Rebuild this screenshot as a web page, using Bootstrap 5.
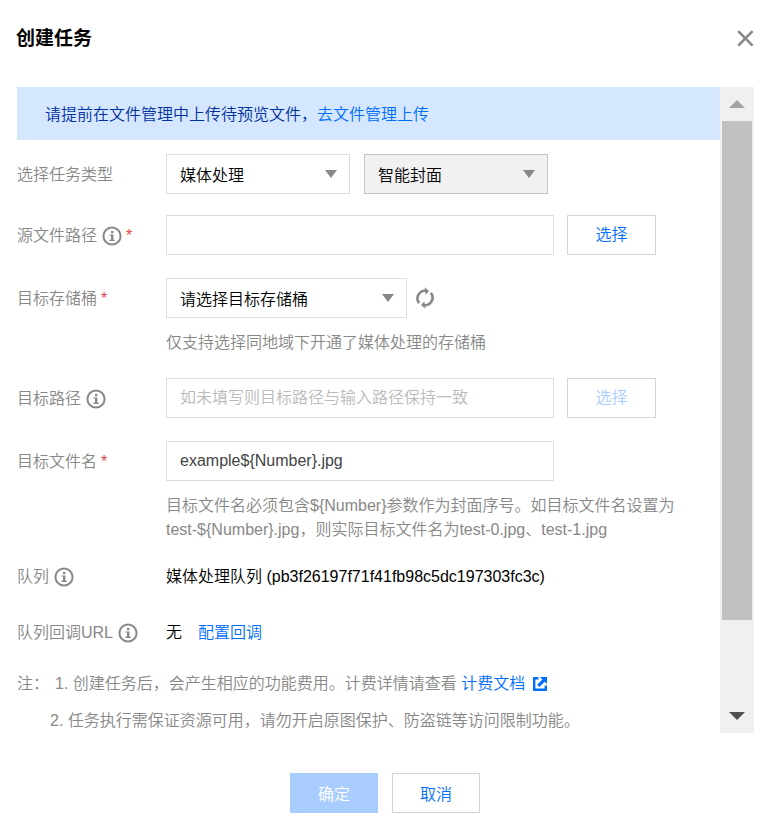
<!DOCTYPE html>
<html lang="zh-CN">
<head>
<meta charset="utf-8">
<meta name="viewport" content="width=device-width, initial-scale=1">
<title>创建任务</title>
<link rel="stylesheet" href="https://cdn.jsdelivr.net/npm/bootstrap@5.3.0/dist/css/bootstrap.min.css">
<style>
  body { font-family: "Liberation Sans", "Noto Sans CJK SC", sans-serif; font-size: 16px; font-weight: 350; line-height: 24px; color: #000; }
  a { color: #006eff; text-decoration: none; }
  .dialog-head { padding: 26px 12px 36px 16px; }
  .dialog-title { font-size: 19px; line-height: 24px; padding-top: 1px; }
  .close-btn { width: 17px; height: 17px; color: #888; }
  .dialog-body { margin: 0 12px 0 17px; }
  .notice { background: #d5e7ff; color: #0031a0; padding: 16px 28px 13px; margin-bottom: 14px; }
  .form-line { margin-bottom: 23px; }
  .form-line-first { margin-bottom: 21px; }
  .form-line-last { margin-top: 32px; margin-bottom: 27px; }
  .line-label { flex: 0 0 149px; color: #888; }
  .tall { min-height: 40px; padding-top: 2px; }
  .req { color: #e54545; margin-left: 4px; }
  .info-icon { width: 20px; height: 20px; margin-left: 5px; }
  .box, .box:disabled { height: 40px; border: 1px solid #ddd; border-radius: 0; padding: 0 13px; font-size: 16px; font-weight: 350; line-height: 24px; color: #000; }
  .box::placeholder { color: #bbb; }
  input.box { color: #444; max-width: 388px; }
  select.box { background-image: url("data:image/svg+xml,%3Csvg xmlns='http://www.w3.org/2000/svg' viewBox='0 0 12 8'%3E%3Cpath d='M0 0h12L6 8z' fill='%23888'/%3E%3C/svg%3E"); background-size: 12px 8px; background-position: right 12px center; padding-top: 3px; }
  select.box.picked { background-color: #f1f1f1; border-color: #c4c4c4; }
  .w-type { max-width: 184px; }
  .w-bucket { max-width: 241px; }
  .gap-type { gap: 14px; }
  .gap-path { gap: 13px; }
  .btn-act { height: 40px; min-width: 88px; border: 1px solid #cfd5de; border-radius: 0; padding: 0 12px; font-size: 16px; font-weight: 350; line-height: 24px; color: #006eff; background: #fff; }
  .btn-act:disabled { opacity: 1; color: #a9cdff; border-color: #cfd5de; background: #fff; }
  .btn-act.main:disabled { color: #fff; background: #a9cdff; border-color: #a9cdff; }
  .gap-path .btn-act { min-width: 89px; }
  .refresh { margin-left: 8px; color: #888; width: 20px; height: 22px; }
  .hint { color: #888; margin-top: 13px; max-width: 520px; }
  .notes { color: #888; }
  .notes p { margin-bottom: 13px; }
  .notes p:last-child { margin-bottom: 0; }
  .first-no { margin-left: 6px; }
  .second { padding-left: 33px; }
  .ext-icon { width: 14px; height: 14px; margin-left: 8px; }
  .bar { flex: 0 0 34px; background: #f0f0f0; padding: 0 2px; }
  .bar-end { flex: 0 0 34px; }
  .bar-end svg { width: 16px; height: 8px; }
  .bar-thumb { background: #c1c1c1; flex: 499 0 0; }
  .bar-rest { flex: 79 0 0; }
  .dialog-foot { padding: 40px 12px 13px 16px; gap: 14px; }
  .dialog-foot .btn-act { padding-top: 3px; }
</style>
<script src="https://cdn.jsdelivr.net/npm/bootstrap@5.3.0/dist/js/bootstrap.bundle.min.js"></script>
</head>
<body>
<svg class="d-none" aria-hidden="true">
  <symbol id="i-info" viewBox="0 0 20 20">
    <circle cx="10" cy="10" r="8.6" fill="none" stroke="#888" stroke-width="2"/>
    <path d="M9 5h2.4v2.2H9zM7.4 8.4h4v5.3h1.3v1.2H7.4v-1.2H9V9.6H7.4z" fill="#888"/>
  </symbol>
</svg>
<main class="d-flex flex-column min-vh-100">
  <header class="dialog-head d-flex justify-content-between align-items-center">
    <h1 class="dialog-title fw-bold m-0">创建任务</h1>
    <button type="button" class="close-btn btn p-0 border-0 d-flex" aria-label="关闭">
      <svg viewBox="0 0 17 17" width="17" height="17"><path d="M1.2 1.2l14.4 14.4M15.6 1.2L1.2 15.6" stroke="currentColor" stroke-width="2.6"/></svg>
    </button>
  </header>

  <div class="dialog-body d-flex flex-grow-1">
    <form class="flex-grow-1">
      <div class="notice">请提前在文件管理中上传待预览文件，<a href="#">去文件管理上传</a></div>

      <div class="form-line-first d-flex">
        <label class="line-label tall d-flex align-items-center" for="type">选择任务类型</label>
        <div class="d-flex flex-grow-1 gap-type">
          <select id="type" class="form-select box w-type"><option>媒体处理</option></select>
          <select class="form-select box w-type picked" aria-label="子类型"><option>智能封面</option></select>
        </div>
      </div>

      <div class="form-line d-flex">
        <label class="line-label tall d-flex align-items-center" for="src">源文件路径<svg class="info-icon"><use href="#i-info"/></svg><span class="req">*</span></label>
        <div class="d-flex flex-grow-1 gap-path">
          <input id="src" type="text" class="form-control box">
          <button type="button" class="btn btn-act">选择</button>
        </div>
      </div>

      <div class="form-line d-flex">
        <label class="line-label tall d-flex align-items-center align-self-start" for="bucket">目标存储桶<span class="req">*</span></label>
        <div class="flex-grow-1">
          <div class="d-flex align-items-center">
            <select id="bucket" class="form-select box w-bucket"><option>请选择目标存储桶</option></select>
            <button type="button" class="refresh btn p-0 border-0 d-flex" aria-label="刷新">
              <svg viewBox="0 0 20 22" width="20" height="22"><g fill="none" stroke="currentColor" stroke-width="2.6"><path d="M4.2 16.2A7.6 7.6 0 0 1 10.8 3.8"/><path d="M15.8 5.8A7.6 7.6 0 0 1 9.2 18.2"/></g><path d="M9.6 .3l4.4 3.6-3.4 3.9zM10.4 21.7L6 18.1l3.4-3.9z" fill="currentColor"/></svg>
            </button>
          </div>
          <div class="hint">仅支持选择同地域下开通了媒体处理的存储桶</div>
        </div>
      </div>

      <div class="form-line d-flex">
        <label class="line-label tall d-flex align-items-center" for="dst">目标路径<svg class="info-icon"><use href="#i-info"/></svg></label>
        <div class="d-flex flex-grow-1 gap-path">
          <input id="dst" type="text" class="form-control box" placeholder="如未填写则目标路径与输入路径保持一致">
          <button type="button" class="btn btn-act" disabled>选择</button>
        </div>
      </div>

      <div class="form-line d-flex">
        <label class="line-label tall d-flex align-items-center align-self-start" for="fname">目标文件名<span class="req">*</span></label>
        <div class="flex-grow-1">
          <input id="fname" type="text" class="form-control box" value="example${Number}.jpg">
          <div class="hint">目标文件名必须包含${Number}参数作为封面序号。如目标文件名设置为test-${Number}.jpg，则实际目标文件名为test-0.jpg、test-1.jpg</div>
        </div>
      </div>

      <div class="d-flex">
        <div class="line-label d-flex align-items-center">队列<svg class="info-icon"><use href="#i-info"/></svg></div>
        <div>媒体处理队列 (pb3f26197f71f41fb98c5dc197303fc3c)</div>
      </div>

      <div class="form-line-last d-flex">
        <div class="line-label d-flex align-items-center">队列回调URL<svg class="info-icon"><use href="#i-info"/></svg></div>
        <div>无<a href="#" class="ms-3">配置回调</a></div>
      </div>

      <div class="notes">
        <p class="d-flex align-items-center"><span>注：<span class="first-no">1. 创建任务后，会产生相应的功能费用。计费详情请查看</span> <a href="#">计费文档</a></span><svg class="ext-icon" viewBox="0 0 14 14"><path d="M0 0h5.5v2.4H2.4v9.2h9.2V8.5H14V14H0zM7 0h7v7l-2.3-2.3L6.4 10 4.2 7.8l5.2-5.4z" fill="#006eff"/></svg></p>
        <p class="second">2. 任务执行需保证资源可用，请勿开启原图保护、防盗链等访问限制功能。</p>
      </div>
    </form>

    <div class="bar d-flex flex-column" aria-hidden="true">
      <div class="bar-end d-flex align-items-center justify-content-center"><svg viewBox="0 0 16 8"><path d="M0 8L8 0l8 8z" fill="#a3a3a3"/></svg></div>
      <div class="bar-thumb"></div>
      <div class="bar-rest"></div>
      <div class="bar-end d-flex align-items-center justify-content-center"><svg viewBox="0 0 16 8"><path d="M0 0h16L8 8z" fill="#505050"/></svg></div>
    </div>
  </div>

  <footer class="dialog-foot d-flex justify-content-center">
    <button type="button" class="btn btn-act main" disabled>确定</button>
    <button type="button" class="btn btn-act">取消</button>
  </footer>
</main>
</body>
</html>
